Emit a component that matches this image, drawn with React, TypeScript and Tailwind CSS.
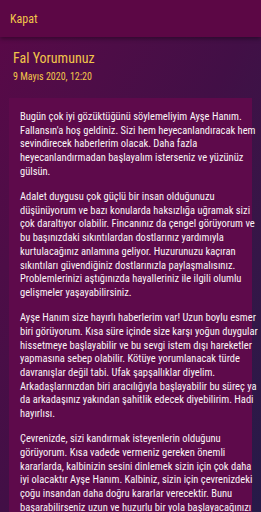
import React from "react";

const paragraphs: string[][] = [
  [
    "Bugün çok iyi gözüktüğünü söylemeliyim Ayşe Hanım.",
    "Fallansın'a hoş geldiniz. Sizi hem heyecanlandıracak hem",
    "sevindirecek haberlerim olacak. Daha fazla",
    "heyecanlandırmadan başlayalım isterseniz ve yüzünüz",
    "gülsün.",
  ],
  [
    "Adalet duygusu çok güçlü bir insan olduğunuzu",
    "düşünüyorum ve bazı konularda haksızlığa uğramak sizi",
    "çok daraltıyor olabilir. Fincanınız da çengel görüyorum ve",
    "bu başınızdaki sıkıntılardan dostlarınız yardımıyla",
    "kurtulacağınız anlamına geliyor. Huzurunuzu kaçıran",
    "sıkıntıları güvendiğiniz dostlarınızla paylaşmalısınız.",
    "Problemlerinizi aştığınızda hayalleriniz ile ilgili olumlu",
    "gelişmeler yaşayabilirsiniz.",
  ],
  [
    "Ayşe Hanım size hayırlı haberlerim var! Uzun boylu esmer",
    "biri görüyorum. Kısa süre içinde size karşı yoğun duygular",
    "hissetmeye başlayabilir ve bu sevgi istem dışı hareketler",
    "yapmasına sebep olabilir. Kötüye yorumlanacak türde",
    "davranışlar değil tabi. Ufak şapşallıklar diyelim.",
    "Arkadaşlarınızdan biri aracılığıyla başlayabilir bu süreç ya",
    "da arkadaşınız yakından şahitlik edecek diyebilirim. Hadi",
    "hayırlısı.",
  ],
  [
    "Çevrenizde, sizi kandırmak isteyenlerin olduğunu",
    "görüyorum. Kısa vadede vermeniz gereken önemli",
    "kararlarda, kalbinizin sesini dinlemek sizin için çok daha",
    "iyi olacaktır Ayşe Hanım. Kalbiniz, sizin için çevrenizdeki",
    "çoğu insandan daha doğru kararlar verecektir. Bunu",
    "başarabilirseniz uzun ve huzurlu bir yola başlayacağınızı",
    "görüyorum.",
  ],
];

export default function App() {
  return (
    <div
      className="w-[261px] h-[512px] overflow-hidden flex flex-col bg-gradient-to-br from-[#5a0848] via-[#420f46] to-[#261a48] [font-stretch:80%]"
      style={{ fontFamily: "Roboto, 'Open Sans', sans-serif" }}
    >
      <div className="h-[37px] shrink-0 bg-[#5c0745] flex items-center px-[10px] shadow-[0_2px_4px_rgba(0,0,0,0.35)] relative z-10">
        <span className="text-[#f2c54a] text-[12px]">Kapat</span>
      </div>
      <div className="px-[13px] pt-[11px]">
        <div className="text-[#f2c54a] text-[14px] leading-[20px]">Fal Yorumunuz</div>
        <div className="text-[#f2c54a] text-[10px] leading-[14px] mt-[2px]">9 Mayıs 2020, 12:20</div>
      </div>
      <div className="mx-[9px] mt-[14px] bg-[#5e0a4b] px-[11px] pt-[12px] pb-4 flex flex-col gap-[11.5px]">
        {paragraphs.map((lines, i) => (
          <p key={i} className="text-[#faf4f7] text-[10.5px] leading-[13.7px] [font-stretch:78%]">
            {lines.map((l, j) => (
              <span key={j} className="block whitespace-nowrap">
                {l}
              </span>
            ))}
          </p>
        ))}
      </div>
    </div>
  );
}
